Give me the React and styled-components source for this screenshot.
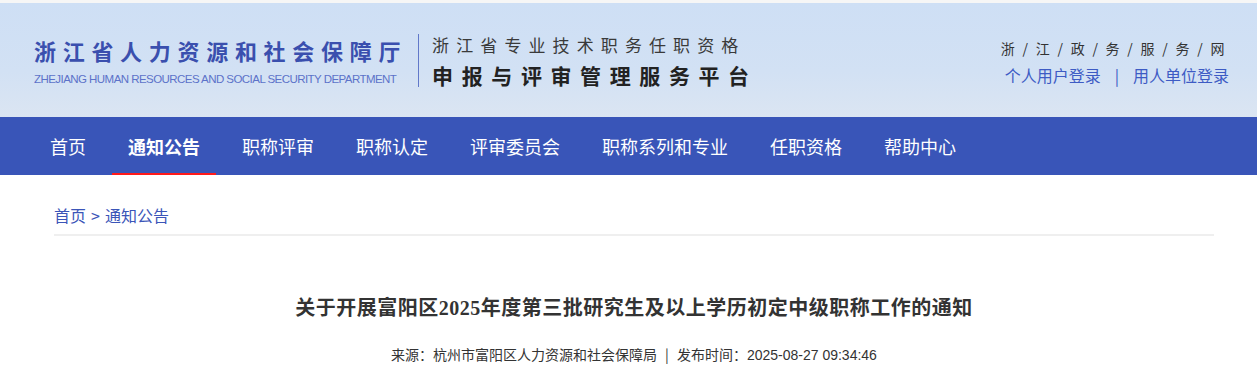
import React from 'react';
import styled, { createGlobalStyle } from 'styled-components';

const GlobalStyle = createGlobalStyle`
  body {
    margin: 0;
    background: #fff;
    font-family: "Noto Sans CJK SC", "Liberation Sans", sans-serif;
  }
`;

const Header = styled.header`
  height: 114px;
  border-top: 3px solid #f6f6f6;
  background: linear-gradient(180deg, #cedff5 0%, #d2e1f4 60%, #dbe5f2 100%);
  display: flex;
  align-items: center;
  justify-content: space-between;
  padding: 0 28px 0 34px;
`;

const Brand = styled.div`
  display: flex;
  align-items: center;
`;

const Dept = styled.div`
  display: flex;
  flex-direction: column;
  padding-right: 11px;
  border-right: 1px solid #6178c9;
  padding-top: 3px;
  height: 53px;
  box-sizing: border-box;
`;

const DeptName = styled.div`
  font-size: 22px;
  font-weight: 700;
  letter-spacing: 6.7px;
  color: #3a4fae;
  line-height: 26px;
  white-space: nowrap;
`;

const DeptEn = styled.div`
  margin-top: 9px;
  font-family: "Liberation Sans", sans-serif;
  font-size: 11.5px;
  letter-spacing: -0.55px;
  color: #5c72c9;
  line-height: 14px;
  white-space: nowrap;
`;

const Platform = styled.div`
  display: flex;
  flex-direction: column;
  padding-left: 13px;
  margin-top: 2px;
`;

const PlatformSub = styled.div`
  font-size: 17px;
  letter-spacing: 7.1px;
  color: #3a3a3a;
  line-height: 22px;
  white-space: nowrap;
`;

const PlatformMain = styled.div`
  margin-top: 6px;
  font-size: 21px;
  font-weight: 700;
  letter-spacing: 8.6px;
  color: #222;
  line-height: 26px;
  white-space: nowrap;
`;

const Side = styled.div`
  display: flex;
  flex-direction: column;
  align-items: flex-end;
  margin-top: 2px;
`;

const GovLink = styled.div`
  font-size: 14px;
  color: #333;
  letter-spacing: 0.5px;
  line-height: 20px;
  word-spacing: 3.6px;
  white-space: nowrap;
  margin-right: 4px;
`;

const LoginRow = styled.div`
  margin-top: 7px;
  font-size: 16px;
  color: #3d5bc4;
  line-height: 20px;
  display: flex;
  gap: 14px;
  white-space: nowrap;
`;

const Nav = styled.nav`
  height: 58px;
  background: #3955b8;
  display: flex;
  align-items: stretch;
  padding-left: 34px;
  gap: 10px;
`;

const NavItem = styled.a`
  display: flex;
  align-items: center;
  padding: 0 16px;
  font-size: 18px;
  color: #fff;
  font-weight: ${(p) => (p.$active ? 700 : 400)};
  border-bottom: 2px solid ${(p) => (p.$active ? '#ff1a1a' : 'transparent')};
  padding-top: 2px;
  text-decoration: none;
  white-space: nowrap;
`;

const Main = styled.main`
  width: 1160px;
  margin-left: 54px;
`;

const Crumb = styled.div`
  height: 61px;
  border-bottom: 2px solid #efefef;
  display: flex;
  align-items: center;
  padding-top: 20px;
  box-sizing: border-box;
  font-size: 16px;
  color: #3b55b8;
  gap: 5px;
`;

const Article = styled.article`
  display: flex;
  flex-direction: column;
  align-items: center;
`;

const Title = styled.h1`
  margin: 58px 0 0;
  font-family: "Liberation Serif", "Noto Sans CJK SC", serif;
  font-size: 20px;
  font-weight: 700;
  letter-spacing: 0.5px;
  color: #333;
  line-height: 28px;
`;

const Meta = styled.div`
  margin-top: 21px;
  font-size: 14px;
  color: #333;
  line-height: 22px;
  display: flex;
  gap: 8px;
`;

const Num = styled.span`
  font-family: "Liberation Sans", sans-serif;
`;

const navItems = [
  '首页',
  '通知公告',
  '职称评审',
  '职称认定',
  '评审委员会',
  '职称系列和专业',
  '任职资格',
  '帮助中心',
];

export default function App() {
  return (
    <>
      <GlobalStyle />
      <Header>
        <Brand>
          <Dept>
            <DeptName>浙江省人力资源和社会保障厅</DeptName>
            <DeptEn>ZHEJIANG HUMAN RESOURCES AND SOCIAL SECURITY DEPARTMENT</DeptEn>
          </Dept>
          <Platform>
            <PlatformSub>浙江省专业技术职务任职资格</PlatformSub>
            <PlatformMain>申报与评审管理服务平台</PlatformMain>
          </Platform>
        </Brand>
        <Side>
          <GovLink>浙 / 江 / 政 / 务 / 服 / 务 / 网</GovLink>
          <LoginRow>
            <span>个人用户登录</span>
            <span>|</span>
            <span>用人单位登录</span>
          </LoginRow>
        </Side>
      </Header>
      <Nav>
        {navItems.map((item) => (
          <NavItem key={item} $active={item === '通知公告'}>
            {item}
          </NavItem>
        ))}
      </Nav>
      <Main>
        <Crumb>
          <span>首页</span>
          <span>&gt;</span>
          <span>通知公告</span>
        </Crumb>
        <Article>
          <Title>关于开展富阳区2025年度第三批研究生及以上学历初定中级职称工作的通知</Title>
          <Meta>
            <span>来源：杭州市富阳区人力资源和社会保障局</span>
            <span>|</span>
            <span>
              发布时间：<Num>2025-08-27 09:34:46</Num>
            </span>
          </Meta>
        </Article>
      </Main>
    </>
  );
}
